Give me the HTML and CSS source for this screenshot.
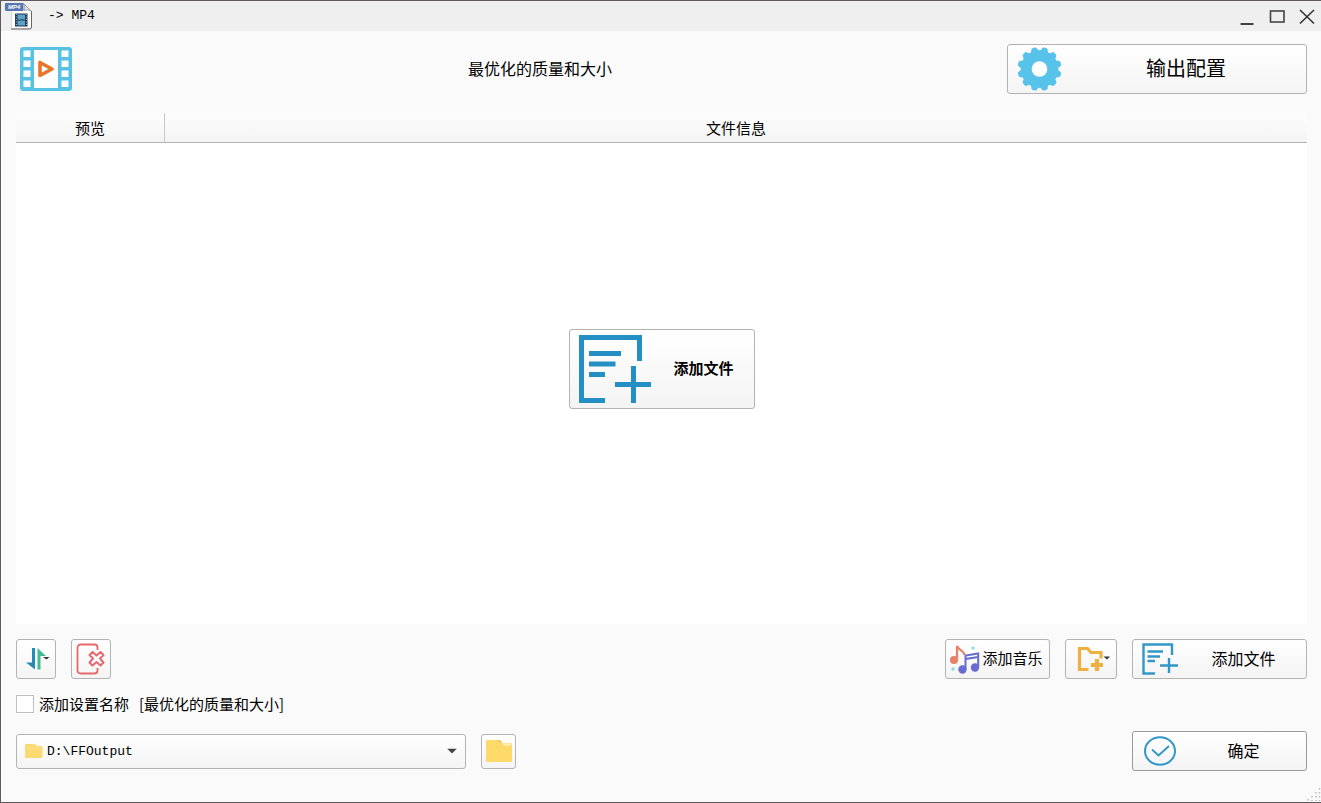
FILE: index.html
```html
<!DOCTYPE html>
<html lang="zh-CN">
<head>
<meta charset="utf-8">
<title>-&gt; MP4</title>
<link rel="stylesheet" href="styles.css">
</head>
<body>
<div class="window">
  <header class="titlebar">
    <svg class="app-icon" width="28" height="28" viewBox="0 0 28 28" aria-hidden="true">
      <path d="M6.500 1.500H19L26.500 9V26.500H6.500Z" fill="#fff" stroke="#d8d8d8"/>
      <path d="M26.500 9V25Q26.500 27 24.500 27H6" fill="none" stroke="#666"/>
      <path d="M18.500 1.500C20 4 20 6 19 8.500C22 7.500 25 8 26.500 9.500Z" fill="#e4e4e4" stroke="#888" stroke-width=".7"/>
      <rect x="0" y="1" width="18.500" height="8" rx="1" fill="#5876b0"/>
      <text x="3" y="7" class="icon-tag">MP4</text>
      <rect x="10" y="11.500" width="12.500" height="13" fill="#17384e"/>
      <rect x="12.500" y="12.500" width="7.500" height="11" fill="#5ea3c6"/>
      <path d="M11.300 12V24M21.300 12V24" stroke="#b9c9d2" stroke-dasharray="1 1.500"/>
      <path d="M12.500 18H20" stroke="#17384e"/>
    </svg>
    <h1 class="titlebar-text mono">-&gt; MP4</h1>
    <div class="window-controls">
      <button class="control" aria-label="最小化"><svg width="16" height="18" viewBox="0 0 16 18"><path d="M1.500 17H14.500" stroke="#444" stroke-width="2"/></svg></button>
      <button class="control" aria-label="最大化"><svg width="16" height="18" viewBox="0 0 16 18"><rect x="1.500" y="4" width="13.500" height="11" fill="none" stroke="#444" stroke-width="1.600"/></svg></button>
      <button class="control" aria-label="关闭"><svg width="16" height="18" viewBox="0 0 16 18"><path d="M1 3L15 16.500M15 3L1 16.500" stroke="#333" stroke-width="1.600"/></svg></button>
    </div>
  </header>

  <main class="content">
    <div class="profile">
      <svg class="film" width="54" height="46" viewBox="0 0 54 46" aria-hidden="true">
        <rect x="1" y="1" width="52" height="44" rx="3" fill="#58c2e5"/>
        <g fill="#fff">
          <rect x="15" y="4" width="24" height="38"/>
          <rect x="4.500" y="4.500" width="7" height="6.500"/><rect x="4.500" y="14.500" width="7" height="6.500"/><rect x="4.500" y="24.500" width="7" height="6.500"/><rect x="4.500" y="34.500" width="7" height="6.500"/>
          <rect x="42.500" y="4.500" width="7" height="6.500"/><rect x="42.500" y="14.500" width="7" height="6.500"/><rect x="42.500" y="24.500" width="7" height="6.500"/><rect x="42.500" y="34.500" width="7" height="6.500"/>
        </g>
        <path d="M21 16.500V29.500L33 23Z" fill="none" stroke="#e87529" stroke-width="3.600" stroke-linejoin="round"/>
      </svg>
      <h2 class="profile-name">最优化的质量和大小</h2>
      <button class="btn btn-config">
        <svg width="46" height="44" viewBox="0 0 46 44" aria-hidden="true">
          <g fill="#58c3ea">
            <circle cx="22.500" cy="22" r="18.800"/>
            <path id="tooth" d="M17.500 4.500Q19 4 19.500 1.500Q20 0 21.500 0H23.500Q25 0 25.500 1.500Q26 4 27.500 4.500V39.500Q26 40 25.500 42.500Q25 44 23.500 44H21.500Q20 44 19.500 42.500Q19 40 17.500 39.500Z" transform="rotate(15 22.500 22)"/>
            <use href="#tooth" transform="rotate(30 22.500 22)"/><use href="#tooth" transform="rotate(60 22.500 22)"/><use href="#tooth" transform="rotate(90 22.500 22)"/><use href="#tooth" transform="rotate(120 22.500 22)"/><use href="#tooth" transform="rotate(150 22.500 22)"/>
          </g>
          <circle cx="22.500" cy="22" r="7.800" fill="#fff"/>
        </svg>
        <span class="btn-text">输出配置</span>
      </button>
    </div>

    <section class="list">
      <table class="files">
        <thead><tr><th class="col-preview">预览</th><th>文件信息</th></tr></thead>
      </table>
      <button class="btn btn-drop">
        <svg width="72" height="68" viewBox="0 0 72 68" aria-hidden="true">
          <path d="M26 65.500H2.500V2.500H60.500V26M54.500 31V68M36 49.500H72M10 18.500H42M10 29H36.500M10 39.500H26" fill="none" stroke="#238fc4" stroke-width="5"/>
        </svg>
        <span class="btn-text">添加文件</span>
      </button>
    </section>

    <div class="row toolbar">
      <button class="btn btn-square" aria-label="排序">
        <svg width="28" height="28" viewBox="0 0 28 28" aria-hidden="true">
          <path d="M10 3H13V24.500L4 17.500H10Z" fill="#258bb5"/>
          <path d="M15.500 24.500V3L24 11H18.500V24.500Z" fill="#45ba91"/>
          <path d="M21 12H27.500L24.500 14.500Z" fill="#333"/>
        </svg>
      </button>
      <button class="btn btn-square" aria-label="清空列表">
        <svg width="30" height="32" viewBox="0 0 30 32" aria-hidden="true">
          <path d="M21.500 7V4.500Q21.500 1.500 18.500 1.500H5Q1.500 1.500 1.500 5V27Q1.500 30.500 5 30.500H18.500Q21.500 30.500 21.500 27.500V25" fill="none" stroke="#e5686c" stroke-width="1.800"/>
          <path d="M16.500 9L20.500 12.500L24.500 9L27.500 12L24 15.500L27.500 19.500L24.500 22.500L20.500 19L16.500 22.500L13.500 19.500L17 15.500L13.500 12Z" fill="#fff" stroke="#e5686c" stroke-width="2" stroke-linejoin="round"/>
        </svg>
      </button>
      <span class="spacer"></span>
      <button class="btn btn-music">
        <svg width="32" height="32" viewBox="0 0 32 32" aria-hidden="true">
          <circle cx="4" cy="17" r="4" fill="#ea7f68"/>
          <path d="M7 17V3C9 8 14 7 14.500 12" fill="none" stroke="#ea7f68" stroke-width="2.200"/>
          <circle cx="12.500" cy="26.500" r="4.200" fill="#686bd0"/><circle cx="25" cy="24.500" r="4.200" fill="#686bd0"/>
          <path d="M15.500 26V12.500L28.200 10.500V24M15.500 16L28.200 14" fill="none" stroke="#686bd0" stroke-width="2"/>
          <circle cx="23" cy="5" r="1.600" fill="#83dce5"/><circle cx="3" cy="26" r="1.700" fill="#83dce5"/>
        </svg>
        <span class="btn-label">添加音乐</span>
      </button>
      <button class="btn btn-folder-add" aria-label="添加文件夹">
        <svg width="38" height="28" viewBox="0 0 38 28" aria-hidden="true">
          <path d="M16.500 24.500H7.500V3.500H15.500L19 7.500H29V13.500" fill="none" stroke="#eeb040" stroke-width="3.200"/>
          <path d="M25 14V26M19 20H31" stroke="#eeb040" stroke-width="4.200"/>
          <path d="M31.500 11.500H38L35 14.500Z" fill="#333"/>
        </svg>
      </button>
      <button class="btn btn-wide">
        <svg width="36" height="32" viewBox="0 0 36 32" aria-hidden="true">
          <path d="M13 30.500H1.500V1.500H30V12M27 15V30M18 22.500H36M5.500 8.500H21M5.500 13.500H18M5.500 18H13" fill="none" stroke="#3396c8" stroke-width="2.400"/>
        </svg>
        <span class="btn-text">添加文件</span>
      </button>
    </div>

    <div class="row option">
      <input class="check" type="checkbox" id="append-name">
      <label class="option-label" for="append-name"><span>添加设置名称</span><span>[最优化的质量和大小]</span></label>
    </div>

    <div class="row output">
      <div class="combo">
        <select class="combo-select mono" aria-label="输出文件夹"><option>D:\FFOutput</option></select>
        <svg class="combo-folder" width="18" height="16" viewBox="0 0 18 16" aria-hidden="true"><path d="M0 2Q0 1 1 1H10L12 3H16.500Q17.500 3 17.500 4V14Q17.500 15 16.500 15H1Q0 15 0 14Z" fill="#fbda72"/><path d="M1 5H17" stroke="#fce49a" stroke-width=".8"/></svg>
        <svg class="combo-arrow" width="10" height="5" viewBox="0 0 10 5" aria-hidden="true"><path d="M0 0H10L5 5Z" fill="#444"/></svg>
      </div>
      <button class="btn btn-browse" aria-label="浏览文件夹">
        <svg width="28" height="24" viewBox="0 0 28 24" aria-hidden="true"><path d="M10 1H15L17 4H10Z" fill="#efb94e"/><path d="M1 2Q1 1 2 1H12.500L16 4H26Q27 4 27 5V22Q27 23 26 23H2Q1 23 1 22Z" fill="#fdda69"/><path d="M17 4.500H26V6.500H19Z" fill="#fff0bd"/></svg>
      </button>
      <span class="spacer"></span>
      <button class="btn btn-wide btn-ok">
        <svg width="36" height="32" viewBox="0 0 36 32" aria-hidden="true"><ellipse cx="18" cy="16" rx="15" ry="13.800" fill="none" stroke="#3396c8" stroke-width="2"/><path d="M10 14.500L16.500 20.500L27 11" fill="none" stroke="#3396c8" stroke-width="1.900"/></svg>
        <span class="btn-text">确定</span>
      </button>
    </div>
  </main>
  <svg class="grip" width="14" height="14" viewBox="0 0 14 14" aria-hidden="true">
    <path d="M12.500 1V14M9 5V14M5 9V14M1 12V14" stroke="#bbb" stroke-width="1.500" stroke-dasharray="1.500 2.500"/>
  </svg>
</div>
</body>
</html>
```
FILE: styles.css
```css
* {
  box-sizing: border-box;
}

body {
  margin: 0;
  color: #000;
  font: 15px/20px "Noto Sans CJK SC", sans-serif;
}

.mono {
  font-family: "Liberation Mono", monospace;
  font-size: 13px;
}

.window {
  position: relative;
  display: flex;
  flex-direction: column;
  min-height: 100vh;
  background: #fafafa;
  border: solid #5e5a5e;
  border-width: 1px 0 1px 1px;
}

.titlebar {
  display: flex;
  align-items: center;
  height: 30px;
  padding: 0 6px 0 4px;
  background: #efefef;
}

.titlebar-text {
  margin: 0 0 0 15px;
  font-weight: 400;
}

.icon-tag {
  fill: #fff;
  font: italic bold 6px "Liberation Sans", sans-serif;
}

.window-controls {
  display: flex;
  gap: 14px;
  margin-left: auto;
}

.control {
  display: flex;
  padding: 0;
  background: none;
  border: 0;
}

.content {
  display: flex;
  flex: 1;
  flex-direction: column;
  padding: 13px 14px 31px 15px;
}

.profile {
  display: flex;
  align-items: center;
  margin-bottom: 19px;
}

.film {
  margin-left: 3px;
}

.profile-name {
  flex: 1;
  margin: 0;
  padding-bottom: 3px;
  font-size: 16px;
  font-weight: 400;
  text-align: center;
}

.btn {
  display: flex;
  align-items: center;
  justify-content: center;
  padding: 0;
  color: #000;
  font: inherit;
  background: linear-gradient(#fff, #f4f4f4);
  border: 1px solid #b3b3b3;
  border-radius: 3px;
}

.btn svg {
  flex: none;
}

.btn-text,
.btn-label {
  padding-bottom: 2px;
}

.btn-text {
  flex: 1;
  text-align: center;
}

.btn-config {
  width: 300px;
  height: 50px;
  padding-left: 9px;
  gap: 3px;
  font-size: 20px;
}

.list {
  display: grid;
  flex: 1;
  background: #fff;
}

.files {
  grid-area: 1 / 1;
  align-self: start;
  width: 100%;
  border-collapse: separate;
  border-spacing: 0;
  table-layout: fixed;
}

.files th {
  height: 30px;
  padding: 0;
  font-weight: 400;
  background: linear-gradient(#fdfdfd, #f4f4f4);
  border-bottom: 1px solid #b3b3b3;
}

.files .col-preview {
  width: 149px;
  border-right: 1px solid #c8c8c8;
}

.btn-drop {
  grid-area: 1 / 1;
  place-self: center;
  width: 186px;
  height: 80px;
  padding-left: 9px;
  gap: 3px;
  font-weight: 700;
}

.row {
  display: flex;
  align-items: center;
  gap: 15px;
}

.spacer {
  flex: 1;
}

.toolbar {
  margin-top: 15px;
}

.btn-square {
  width: 40px;
  height: 40px;
}

.btn-music {
  width: 105px;
  height: 40px;
  padding-right: 2px;
}

.btn-folder-add {
  width: 52px;
  height: 40px;
}

.btn-wide {
  width: 175px;
  height: 40px;
  padding-left: 9px;
  gap: 3px;
  font-size: 16px;
}

.btn-ok {
  border-color: #999;
}

.option {
  gap: 5px;
  margin: 15px 0 17px;
}

.check {
  width: 18px;
  height: 18px;
  margin: 0;
  appearance: none;
  background: #fff;
  border: 1px solid #c0c0c0;
}

.check:checked {
  background: #3396c8;
}

.option-label {
  display: flex;
  gap: 10px;
}

.combo {
  position: relative;
  flex: 0 1 450px;
}

.combo-select {
  width: 100%;
  height: 35px;
  padding: 0 24px 0 30px;
  color: #000;
  appearance: none;
  background: linear-gradient(#fff, #f4f4f4);
  border: 1px solid #b3b3b3;
  border-radius: 3px;
}

.combo-folder,
.combo-arrow {
  position: absolute;
  top: 50%;
  transform: translateY(-50%);
  pointer-events: none;
}

.combo-folder {
  left: 9px;
}

.combo-arrow {
  right: 9px;
}

.btn-browse {
  width: 35px;
  height: 35px;
}

.grip {
  position: absolute;
  right: 0;
  bottom: 1px;
}
```
